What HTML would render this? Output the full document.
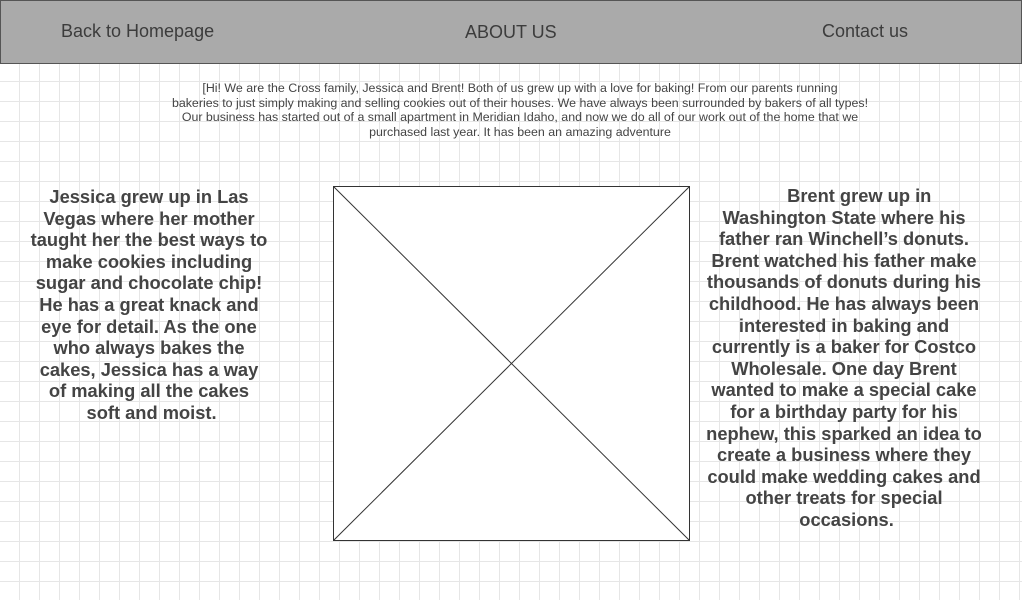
<!DOCTYPE html>
<html><head><meta charset="utf-8"><style>
html,body{margin:0;padding:0}
body{width:1022px;height:600px;overflow:hidden;position:relative;background:#fff;
background-image:linear-gradient(to right,#e6e6e6 1px,transparent 1px),linear-gradient(to bottom,#e6e6e6 1px,transparent 1px);
background-size:20px 20px;background-position:19px 1px;
font-family:"Liberation Sans",sans-serif;color:#444}
.hdr{position:absolute;left:0;top:0;width:1020px;height:62px;background:#aaa;border:1px solid #555}
.nav{position:absolute;font-size:18px;color:#3c3c3c;white-space:nowrap}
.intro{position:absolute;left:120px;width:800px;top:81px;text-align:center;font-size:12.4px;line-height:14.5px;color:#444}
.col{position:absolute;text-align:center;font-weight:bold;font-size:18.3px;line-height:21.6px;color:#444;white-space:nowrap}
.img{position:absolute;left:333px;top:186px;width:355px;height:353px;border:1px solid #333;background:#fff}
</style></head><body>
<div class="hdr"></div>
<div class="nav" style="left:61px;top:21px">Back to Homepage</div>
<div class="nav" style="left:465px;top:22px">ABOUT US</div>
<div class="nav" style="left:822px;top:21px">Contact us</div>
<div class="intro">[Hi! We are the Cross family, Jessica and Brent! Both of us grew up with a love for baking! From our parents running<br>bakeries to just simply making and selling cookies out of their houses. We have always been surrounded by bakers of all types!<br>Our business has started out of a small apartment in Meridian Idaho, and now we do all of our work out of the home that we<br>purchased last year. It has been an amazing adventure</div>
<div class="col" style="left:0px;width:298px;top:186px">Jessica grew up in Las<br>Vegas where her mother<br>taught her the best ways to<br>make cookies including<br>sugar and chocolate chip!<br>He has a great knack and<br>eye for detail. As the one<br>who always bakes the<br>cakes, Jessica has a way<br>of making all the cakes<br>&nbsp;soft and moist.</div>
<div class="img"><svg width="355" height="353" style="display:block"><line x1="0" y1="0" x2="355" y2="353" stroke="#333" stroke-width="1"/><line x1="355" y1="0" x2="0" y2="353" stroke="#333" stroke-width="1"/></svg></div>
<div class="col" style="left:694px;width:300px;top:185px">&nbsp; &nbsp; &nbsp; Brent grew up in<br>Washington State where his<br>father ran Winchell’s donuts.<br>Brent watched his father make<br>thousands of donuts during his<br>childhood. He has always been<br>interested in baking and<br>currently is a baker for Costco<br>Wholesale. One day Brent<br>wanted to make a special cake<br>for a birthday party for his<br>nephew, this sparked an idea to<br>create a business where they<br>could make wedding cakes and<br>other treats for special<br>&nbsp;occasions.</div>
</body></html>
